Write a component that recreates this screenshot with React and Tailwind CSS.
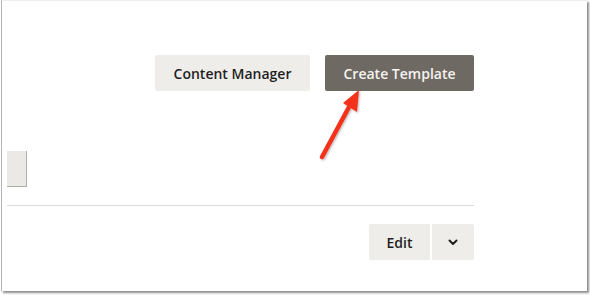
const Chevron = () => (
  <svg width="10" height="7" viewBox="0 0 10 7" fill="none">
    <path d="M1.5 1.5 L5 5 L8.5 1.5" stroke="#1f1f1f" strokeWidth="2" strokeLinecap="round" strokeLinejoin="round" />
  </svg>
);

const Arrow = () => (
  <svg
    className="absolute left-0 top-0 pointer-events-none"
    width="590"
    height="295"
    viewBox="0 0 590 295"
  >
    <defs>
      <filter id="sh" x="-20%" y="-20%" width="140%" height="140%">
        <feDropShadow dx="1" dy="1" stdDeviation="1" floodColor="#000" floodOpacity="0.3" />
      </filter>
    </defs>
    <g filter="url(#sh)">
      <line x1="322" y1="157" x2="349" y2="107" stroke="#f4311b" strokeWidth="4.5" strokeLinecap="round" />
      <polygon points="359,90 343,103 357,112" fill="#f4311b" />
    </g>
  </svg>
);

export default function App() {
  return (
    <div className="relative w-[590px] h-[295px] bg-white overflow-hidden" style={{ fontFamily: '"Open Sans", sans-serif' }}>
      <div className="ml-[1px] w-[586px] h-[291px] border-l border-t border-l-[#b3b3b3] border-t-[#ececec] bg-white shadow-[2px_2px_2px_rgba(0,0,0,0.45)]">
        <div className="ml-[5px] w-[467px] pt-[54px]">
          <div className="flex justify-end gap-[15px]">
            <button className="w-[155px] h-[36px] rounded-[2px] bg-[#efedea] text-[#1f1f1f] text-[14px] font-semibold">
              Content Manager
            </button>
            <button className="w-[149px] h-[36px] rounded-[2px] bg-[#6f6963] text-[#f5f3f0] text-[14px] font-semibold">
              Create Template
            </button>
          </div>
          <div className="mt-[60px] w-[20px] h-[36px] bg-[#ebe9e6] border-r border-b border-[#adadad]" />
          <div className="mt-[18px] border-t border-[#d9d9d9]" />
          <div className="mt-[18px] flex justify-end gap-[2px]">
            <button className="w-[61px] h-[36px] rounded-l-[2px] bg-[#efedea] text-[#1f1f1f] text-[14px] font-semibold">
              Edit
            </button>
            <button className="w-[42px] h-[36px] rounded-r-[2px] bg-[#efedea] flex items-center justify-center">
              <Chevron />
            </button>
          </div>
        </div>
      </div>
      <Arrow />
    </div>
  );
}
